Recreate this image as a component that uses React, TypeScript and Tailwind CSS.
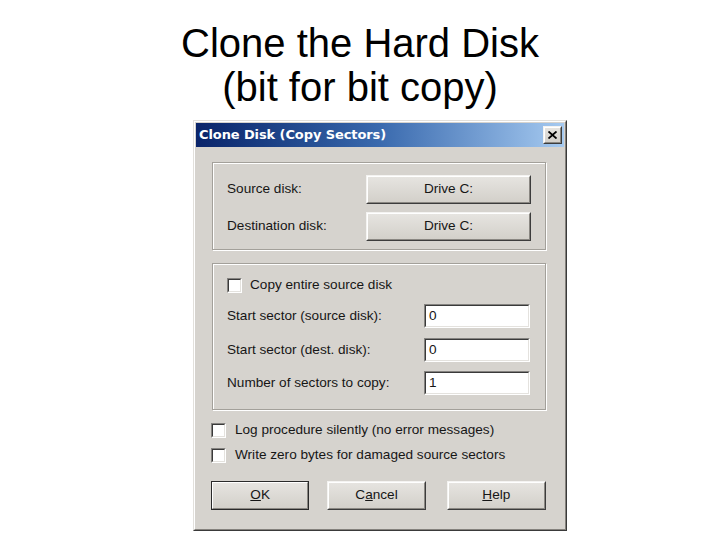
const ui = "font-['Liberation_Sans',Arial,sans-serif] text-[13.6px] text-[#161616]";

function Raised({ children, className = "", isDefault = false }: { children: React.ReactNode; className?: string; isDefault?: boolean }) {
  return (
    <div className={`${isDefault ? "border border-[#2a2a2a]" : "border border-t-[#f4f3f1] border-l-[#f4f3f1] border-r-[#3c3c3c] border-b-[#3c3c3c]"} ${className}`}>
      <div className="h-full border border-t-[#ffffff] border-l-[#ffffff] border-r-[#8a8782] border-b-[#8a8782] bg-gradient-to-b from-[#e6e4e0] to-[#d3d0ca] flex items-center justify-center">
        {children}
      </div>
    </div>
  );
}

function Sunken({ children, className = "" }: { children?: React.ReactNode; className?: string }) {
  return (
    <div className={`border border-t-[#858380] border-l-[#858380] border-r-[#ffffff] border-b-[#ffffff] ${className}`}>
      <div className="h-full border border-t-[#3a3a3a] border-l-[#3a3a3a] border-r-[#e4e2de] border-b-[#e4e2de] bg-white flex items-center">
        {children}
      </div>
    </div>
  );
}

function Check({ label, gap = "gap-[9px]" }: { label: string; gap?: string }) {
  return (
    <div className={`flex items-center h-[15px] ${gap}`}>
      <Sunken className="w-[15px] h-[15px]" />
      <span className={ui}>{label}</span>
    </div>
  );
}

function Field({ label, value, className = "" }: { label: string; value: string; className?: string }) {
  return (
    <div className={`flex items-center justify-between ${className}`}>
      <span className={ui}>{label}</span>
      <Sunken className="w-[106px] h-[24px]">
        <span className={`${ui} pl-[3px]`}>{value}</span>
      </Sunken>
    </div>
  );
}

function Group({ children, className = "" }: { children: React.ReactNode; className?: string }) {
  return (
    <div className={`border border-[#a3a09a] shadow-[inset_1px_1px_0_#ffffff,1px_1px_0_#ffffff] ${className}`}>
      {children}
    </div>
  );
}

export default function App() {
  return (
    <div className="w-[720px] h-[540px] bg-white overflow-hidden">
      <h1 className="pt-[21px] text-center text-[40px] leading-[44px] font-normal text-black font-['Liberation_Sans',Arial,sans-serif]">
        Clone the Hard Disk
        <br />
        (bit for bit copy)
      </h1>

      <div className="ml-[193px] mt-[11px] w-[374px] border border-t-[#e2e0dc] border-l-[#e2e0dc] border-r-[#3a3a3a] border-b-[#3a3a3a]">
        <div className="border border-t-white border-l-white border-r-[#85827d] border-b-[#85827d] bg-[#d6d3ce] p-px">
          <div className="h-[24px] bg-gradient-to-r from-[#0a246a] via-[#3a6aae] to-[#a6caf0] flex items-center justify-between pl-[3px] pr-[2px]">
            <span className="text-white font-bold text-[13px] font-['DejaVu_Sans',Verdana,sans-serif] tracking-[-0.1px]">
              Clone Disk (Copy Sectors)
            </span>
            <Raised className="w-[19px] h-[18px]">
              <svg width="9" height="8" viewBox="0 0 9 8">
                <path d="M0.5 0.5 L8.5 7.5 M8.5 0.5 L0.5 7.5" stroke="#000" strokeWidth="1.8" />
              </svg>
            </Raised>
          </div>

          <div className="pl-[16px] pr-[18px] pt-[15px] pb-[18px]">
            <Group className="pt-[12px] pb-[8px] pl-[14px] pr-[14px] flex flex-col gap-[8px]">
              <div className="flex items-center justify-between">
                <span className={ui}>Source disk:</span>
                <Raised className="w-[165px] h-[29px]">
                  <span className={ui}>Drive C:</span>
                </Raised>
              </div>
              <div className="flex items-center justify-between">
                <span className={ui}>Destination disk:</span>
                <Raised className="w-[165px] h-[29px]">
                  <span className={ui}>Drive C:</span>
                </Raised>
              </div>
            </Group>

            <Group className="mt-[13px] pt-[14px] pb-[14px] pl-[14px] pr-[15px]">
              <Check label="Copy entire source disk" gap="gap-[8px]" />
              <Field className="mt-[11px]" label="Start sector (source disk):" value="0" />
              <Field className="mt-[10px]" label="Start sector (dest. disk):" value="0" />
              <Field className="mt-[9px]" label="Number of sectors to copy:" value="1" />
            </Group>

            <div className="mt-[13px] -ml-px flex flex-col gap-[10px]">
              <Check label="Log procedure silently (no error messages)" />
              <Check label="Write zero bytes for damaged source sectors" />
            </div>

            <div className="mt-[18px] -ml-px flex">
              <Raised isDefault className="w-[99px] h-[29px]">
                <span className={ui}>
                  <span className="underline">O</span>K
                </span>
              </Raised>
              <Raised className="ml-[18px] w-[99px] h-[29px]">
                <span className={ui}>
                  C<span className="underline">a</span>ncel
                </span>
              </Raised>
              <Raised className="ml-[21px] w-[100px] h-[29px]">
                <span className={ui}>
                  <span className="underline">H</span>elp
                </span>
              </Raised>
            </div>
          </div>
        </div>
      </div>
    </div>
  );
}
